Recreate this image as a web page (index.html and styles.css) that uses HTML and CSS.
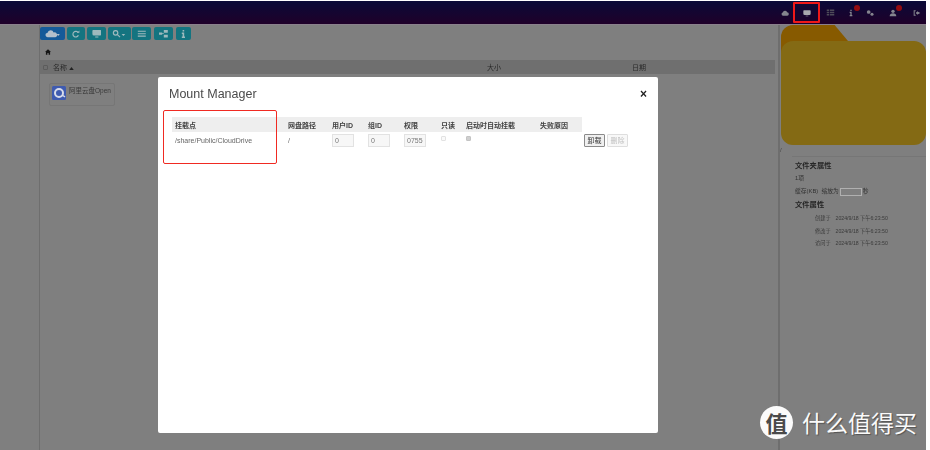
FILE: index.html
```html
<!DOCTYPE html>
<html lang="zh">
<head>
<meta charset="utf-8">
<title>Mount Manager</title>
<link rel="stylesheet" href="styles.css">
</head>
<body>
<div class="app">
  <header class="topbar">
    <svg class="hicon h-cloud" viewBox="0 0 12 12"><path d="M3 10a2.400 2.400 0 0 1-.4-4.700A3.500 3.500 0 0 1 9.200 5 2.500 2.500 0 0 1 9.300 10z"/></svg>
    <span class="hbox"><svg class="hicon" viewBox="0 0 12 12"><path d="M1.500 2h9a1 1 0 0 1 1 1v4a2 2 0 0 1-2 2h-7a2 2 0 0 1-2-2V3a1 1 0 0 1 1-1zM4 10h4v1H4z"/></svg></span>
    <svg class="hicon dim h-list" viewBox="0 0 12 12"><path d="M1 2h3v2H1zM5 2h6v2H5zM1 5h3v2H1zM5 5h6v2H5zM1 8h3v2H1zM5 8h6v2H5z"/></svg>
    <span class="hitem h-info"><svg class="hicon" viewBox="0 0 12 12"><path d="M5 1h2v2H5zM4 4h3v5h1v2H4V9h1V6H4z"/></svg><i class="badge"></i></span>
    <svg class="hicon h-gear" viewBox="0 0 12 12"><circle cx="4" cy="4.500" r="2.800"/><circle cx="9" cy="8" r="2.300"/></svg>
    <span class="hitem h-user"><svg class="hicon" viewBox="0 0 12 12"><circle cx="6" cy="3.500" r="2.500"/><path d="M1 11c0-3 2-4.500 5-4.500S11 8 11 11z"/></svg><i class="badge"></i></span>
    <svg class="hicon h-out" viewBox="0 0 12 12"><path d="M1 2h3v1.500H2.500v5H4V10H1zM6 3.500 11 6 6 8.500V7H4.500V5H6z"/></svg>
  </header>
  <div class="body">
    <aside class="rail"></aside>
    <main class="main">
      <div class="toolbar">
        <button class="tool primary"><svg viewBox="0 0 20 10"><path d="M3.500 9a2.800 2.800 0 0 1-.3-5.600A4 4 0 0 1 10.800 3 3 3 0 0 1 13 9z"/><path d="M14.500 5h4l-2 2.500z"/></svg></button>
        <button class="tool t1"><svg viewBox="0 0 12 10"><path class="ln" d="M9 3.500A3.500 3.500 0 1 0 9.200 6.500"/><path d="M7.500 3.500h3v-3z"/></svg></button>
        <button class="tool t2"><svg viewBox="0 0 12 10"><path d="M1.500 0h9a1 1 0 0 1 1 1v4a2 2 0 0 1-2 2h-7a2 2 0 0 1-2-2V1a1 1 0 0 1 1-1zM4 8h4v1.500H4z"/></svg></button>
        <button class="tool t3"><svg viewBox="0 0 18 10"><circle class="ln" cx="4.500" cy="3.500" r="2.800"/><path class="ln" d="m6.500 5.500 3.500 3.500"/><path d="M12 5h4.500l-2.250 2.500z"/></svg></button>
        <button class="tool t4"><svg viewBox="0 0 12 10"><path d="M1 1h10v1.300H1zM1 4h10v1.300H1zM1 7h10v1.300H1z"/></svg></button>
        <button class="tool t5"><svg viewBox="0 0 12 10"><path d="M0 3h4v3H0zM6 0h5v3.500H6zM6 6h5v3.500H6zM4 4h2v1H4z"/></svg></button>
        <button class="tool t6"><svg viewBox="0 0 6 10"><path d="M2 0h2v2H2zM1 3h3v5h1v2H1V8h1V5H1z"/></svg></button>
      </div>
      <div class="crumb"><svg viewBox="0 0 10 9"><path d="M5 0 10 4.500H8.500V9H6V6H4V9H1.500V4.500H0z"/></svg></div>
      <div class="listhead">
        <span class="check"></span>
        <span class="col-name">名称 <svg class="caret" viewBox="0 0 6 4"><path d="M3 0 6 4H0z"/></svg></span>
        <span class="col-size">大小</span>
        <span class="col-date">日期</span>
      </div>
      <div class="card">
        <svg class="cardicon" viewBox="0 0 14 14"><rect width="14" height="14" rx="1.500" fill="#3f5bb0"/><circle cx="7" cy="7" r="4" fill="none" stroke="#d8dcea" stroke-width="2"/><path d="M11 9.500 13 11" stroke="#d8dcea" stroke-width="1.500"/></svg>
        <span class="cardname">阿里云盘Open</span>
      </div>
    </main>
    <aside class="panel">
      <div class="folder"><div class="folder-tab"></div><div class="folder-body"></div></div>
      <p class="fname">/</p>
      <section class="props">
        <h4>文件夹属性</h4>
        <p class="pline">1项</p>
        <p class="pline">缓存(KB) &nbsp;缩放为<span class="ptext"></span>秒</p>
        <h4>文件属性</h4>
        <p class="pdate"><span>创建于</span><span>2024/9/18 下午6:23:50</span></p>
        <p class="pdate"><span>修改于</span><span>2024/9/18 下午6:23:50</span></p>
        <p class="pdate"><span>访问于</span><span>2024/9/18 下午6:23:50</span></p>
      </section>
    </aside>
  </div>
</div>

<div class="modal">
  <div class="modal-head">
    <h3>Mount Manager</h3>
    <span class="close">×</span>
  </div>
  <table class="mounts">
    <thead>
      <tr>
        <th class="c-point">挂载点</th>
        <th class="c-path">网盘路径</th>
        <th class="c-uid">用户ID</th>
        <th class="c-uid">组ID</th>
        <th class="c-perm">权限</th>
        <th class="c-ro">只读</th>
        <th class="c-auto">启动时自动挂载</th>
        <th class="c-fail">失败原因</th>
        <th class="c-act"></th>
      </tr>
    </thead>
    <tbody>
      <tr>
        <td>/share/Public/CloudDrive</td>
        <td>/</td>
        <td><input class="num" value="0"></td>
        <td><input class="num" value="0"></td>
        <td><input class="num" value="0755"></td>
        <td><input class="cb" type="checkbox" disabled></td>
        <td><input class="cb" type="checkbox" checked disabled></td>
        <td></td>
        <td class="acts"><button class="btn on">卸载</button><button class="btn off">删除</button></td>
      </tr>
    </tbody>
  </table>
  <div class="callout"></div>
</div>

<div class="mark"><span class="mark-logo">值</span><span class="mark-text">什么值得买</span></div>
</body>
</html>
```
FILE: styles.css
```css
* { box-sizing: border-box; }
html, body { margin: 0; height: 100%; }
html { overflow: hidden; }
body {
  position: relative;
  width: 930px;
  height: 450px;
  overflow: hidden;
  background: #fff;
  padding: 1px 4px 0 0;
  font-family: "Liberation Sans", "Noto Sans CJK SC", sans-serif;
  color: #2e2e2e;
}
.app {
  height: 449px;
  background: #7f7f7f;
  display: flex;
  flex-direction: column;
  filter: blur(.35px);
}
.topbar {
  height: 24px;
  flex: none;
  background: linear-gradient(#0a0a38, #1f0029);
  border-bottom: 1px solid #8a808c;
  display: flex;
  align-items: center;
  justify-content: flex-end;
  padding-right: 5px;
}
.hicon { width: 8px; height: 8px; fill: #85858e; flex: none; display: block; }
.hicon.dim { fill: #4e4b58; width: 9px; height: 9px; }
.hbox {
  width: 27px;
  height: 21px;
  border: 2px solid #f01818;
  border-radius: 1px;
  display: flex;
  align-items: center;
  justify-content: center;
  margin-left: 4px;
}
.hbox .hicon { fill: #a8a8ae; }
.h-list { margin-left: 6px; }
.h-info { margin-left: 12px; }
.h-gear { margin-left: 11px; }
.h-user { margin-left: 15px; }
.h-out { margin-left: 16px; }
.hitem { position: relative; display: block; }
.badge {
  position: absolute;
  right: -5px;
  top: -4px;
  width: 6px;
  height: 6px;
  border-radius: 50%;
  background: #940c10;
}
.body { flex: 1; display: flex; min-height: 0; }
.rail { width: 40px; flex: none; border-right: 1px solid #6e6e6e; }
.main { flex: 1; min-width: 0; display: flex; flex-direction: column; margin-right: 3px; }
.toolbar { display: flex; gap: 2px; height: 13px; margin-top: 2px; }
.tool {
  border: 0;
  padding: 0;
  border-radius: 2px;
  background: #147480;
  display: flex;
  align-items: center;
  justify-content: center;
  width: 18px;
}
.tool svg { height: 8px; width: auto; fill: #9eb9bd; display: block; }
.tool .ln { fill: none; stroke: #9eb9bd; stroke-width: 1.500; }
.tool.primary { background: #155a99; width: 25px; }
.tool.primary svg { height: 8px; fill: #b4c0cc; }
.tool.t2 { width: 19px; }
.tool.t3 { width: 23px; }
.tool.t4 { width: 19px; margin-left: -1px; }
.tool.t5 { width: 19px; margin-left: 1px; }
.tool.t6 { width: 15px; margin-left: 1px; }
.crumb { height: 20px; padding: 4px 0 0 5px; display: flex; align-items: center; }
.crumb svg { width: 6px; height: 6px; fill: #151515; display: block; }
.listhead {
  height: 14px;
  background: #6f6f6f;
  display: flex;
  align-items: center;
  font-size: 7px;
  color: #2a2a2a;
}
.check { width: 5px; height: 5px; border: 1px solid #5c5c5c; border-radius: 1px; margin-left: 3px; flex: none; }
.col-name { margin-left: 5px; width: 434px; flex: none; }
.caret { width: 5px; height: 3px; fill: #222; }
.col-size { width: 145px; flex: none; }
.col-date { flex: none; }
.card {
  width: 66px;
  height: 23px;
  margin: 9px 0 0 9px;
  border: 1px solid #767676;
  border-radius: 2px;
  display: flex;
  align-items: flex-start;
  padding: 2px 0 0 2px;
  gap: 3px;
}
.cardicon { width: 14px; height: 14px; flex: none; display: block; }
.cardname { font-size: 6.500px; line-height: 9px; color: #3a3a3a; white-space: nowrap; }
.panel { width: 148px; flex: none; border-left: 2px solid #6e6e6e; padding: 0 0 0 1px; }
.folder { height: 120px; position: relative; }
.folder-tab {
  width: 67px;
  height: 30px;
  background: #875a00;
  border-radius: 12px 0 0 0;
  clip-path: polygon(0 0, 80% 0, 100% 53%, 100% 100%, 0 100%);
}
.folder-body {
  position: absolute;
  left: 0;
  right: 0;
  top: 16px;
  height: 104px;
  background: #846a14;
  border-radius: 12px;
}
.fname { margin: 0 0 0 -1px; height: 11px; line-height: 11px; font-size: 6px; color: #444; }
.props { margin: 0 0 0 11px; border-top: 1px solid #767676; padding: 3px 0 0 3px; font-size: 5.800px; color: #333; }
.props h4 { margin: 0; font-size: 7.300px; line-height: 11px; font-weight: bold; color: #262626; }
.pline { margin: 2px 0 0; height: 11px; line-height: 11px; display: flex; align-items: center; white-space: pre; }
.ptext { width: 22px; height: 8px; border: 1px solid #b0b0b0; display: inline-block; margin: 0 1px; }
.pline + h4 { margin-top: 2px; }
.pdate { margin: 2px 0 0 20px; height: 10.500px; line-height: 10.500px; display: flex; gap: 5px; font-size: 5.200px; color: #3a3a3a; white-space: nowrap; }
.props h4 + .pdate { margin-top: 3px; }

.modal {
  position: absolute;
  left: 158px;
  top: 77px;
  width: 500px;
  height: 356px;
  background: #fff;
  border-radius: 2px;
  filter: blur(.3px);
}
.modal-head { display: flex; justify-content: space-between; align-items: center; height: 33px; padding: 0 11px; }
.modal-head h3 { margin: 0; font-size: 12.500px; font-weight: normal; color: #4a4a4a; }
.close { font-size: 12px; font-weight: bold; color: #222; }
.mounts {
  margin: 7px 0 0 14px;
  border-collapse: collapse;
  table-layout: fixed;
  width: 458px;
  font-size: 7px;
  color: #666;
}
.mounts th {
  height: 15px;
  padding: 0 0 0 3px;
  background: #eeeeee;
  text-align: left;
  font-weight: bold;
  color: #444;
  white-space: nowrap;
  overflow: hidden;
}
.mounts th.c-act { background: none; }
.mounts td { height: 16px; padding: 0 0 0 3px; vertical-align: middle; white-space: nowrap; }
.c-point { width: 113px; }
.c-path { width: 44px; }
.c-uid { width: 36px; }
.c-perm { width: 37px; }
.c-ro { width: 25px; }
.c-auto { width: 74px; }
.c-fail { width: 45px; }
.c-act { width: 48px; }
.num {
  width: 22px;
  height: 13px;
  border: 1px solid #e2e2e2;
  background: #f7f7f7;
  padding: 0 0 0 2px;
  font: 7px "Liberation Sans", sans-serif;
  color: #777;
  display: block;
}
.cb {
  appearance: none;
  width: 5px;
  height: 5px;
  margin: 0 0 4px;
  display: block;
  border: 1px solid #e2e2e2;
  border-radius: 1px;
  background: #fafafa;
}
.cb:checked { background: #cfcfcf; border-color: #c4c4c4; }
.mounts td.acts { padding: 0 0 0 2px; }
.acts { display: flex; gap: 2px; align-items: center; }
.btn { width: 21px; height: 13px; padding: 0; font: 7px "Noto Sans CJK SC", sans-serif; border-radius: 1px; background: #f0f0f0; }
.btn.on { border: 1px solid #8a8a8a; color: #333; }
.btn.off { border: 1px solid #dedede; color: #c0c0c0; background: #f8f8f8; }
.callout {
  position: absolute;
  left: 5px;
  top: 33px;
  width: 114px;
  height: 54px;
  border: 1.500px solid #f02a22;
  border-radius: 2px;
}
.mark { position: absolute; left: 760px; top: 406px; display: flex; align-items: center; gap: 9px; }
.mark-logo {
  width: 33px;
  height: 33px;
  border-radius: 50%;
  background: #fbfbfb;
  color: #4a4a4a;
  font: bold 22px/33px "Noto Sans CJK SC", sans-serif;
  text-align: center;
}
.mark-text {
  font: 23px/33px "Noto Sans CJK SC", sans-serif;
  color: #fafafa;
  text-shadow: 1px 1px 1px rgba(0, 0, 0, .35);
  white-space: nowrap;
}
```
